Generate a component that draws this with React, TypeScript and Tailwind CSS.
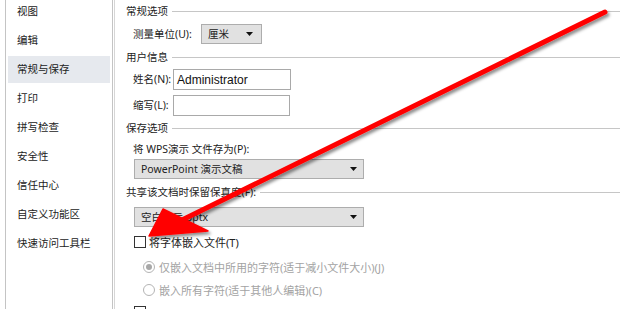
import React from "react";

const items = ["视图", "编辑", "常规与保存", "打印", "拼写检查", "安全性", "信任中心", "自定义功能区", "快速访问工具栏"];

function Header({ text }: { text: string }) {
  return (
    <div className="flex h-[22px] items-center pl-[11px]">
      <span className="whitespace-nowrap">{text}</span>
      <div className="ml-[4px] h-px flex-1 bg-[#c6c6c6]" />
    </div>
  );
}

function Caret() {
  return (
    <svg width="7" height="4" viewBox="0 0 7 4" className="shrink-0">
      <path d="M0 0H7L3.5 4Z" fill="#111" />
    </svg>
  );
}

function Select({ text, w, caretPad }: { text: string; w: string; caretPad: string }) {
  return (
    <div className={`flex h-[20px] items-center justify-between border border-[#adadad] bg-[#e1e1e1] pl-[6px] ${w} ${caretPad}`}>
      <span className="whitespace-nowrap">{text}</span>
      <Caret />
    </div>
  );
}

export default function App() {
  return (
    <div className="relative h-[309px] w-[620px] overflow-hidden bg-white font-['Noto_Sans','Noto_Sans_CJK_SC',sans-serif] text-[10.5px] leading-none text-[#222]">
      <div className="flex h-full">
        <div className="ml-[5px] h-full w-[108px] shrink-0 border-x border-[#c4c4c4] px-[2px] pt-0">
          <div className="-mt-[3px]">
            {items.map((t, i) => (
              <div key={t} className="flex h-[29px] items-center py-[1px]">
                <div className={`flex h-full w-full items-center pl-[9px] ${i === 2 ? "bg-[#e6e9ee]" : ""}`}>{t}</div>
              </div>
            ))}
          </div>
        </div>
        <div className="ml-[1px] h-full flex-1 border-l border-[#d6d6d6]">
          <Header text="常规选项" />
          <div className="mt-[2px] flex h-[20px] items-center pl-[18px]">
            <span className="w-[68px] whitespace-nowrap">测量单位(U):</span>
            <Select text="厘米" w="w-[61px]" caretPad="pr-[8px]" />
          </div>
          <div className="mt-[2px]">
            <Header text="用户信息" />
          </div>
          <div className="mt-[1px] flex h-[21px] items-center pl-[18px]">
            <span className="w-[40px] whitespace-nowrap">姓名(N):</span>
            <div className="flex h-[21px] w-[118px] items-center border border-[#a9a9a9] pl-[3px] font-['Liberation_Sans',sans-serif] text-[12px] text-[#111]">Administrator</div>
          </div>
          <div className="mt-[5px] flex h-[21px] items-center pl-[18px]">
            <span className="w-[40px] whitespace-nowrap">缩写(L):</span>
            <div className="h-[21px] w-[117px] border border-[#a9a9a9]" />
          </div>
          <div className="mt-[1px]">
            <Header text="保存选项" />
          </div>
          <div className="flex h-[20px] items-center pl-[18px] whitespace-pre">将 WPS演示 文件存为(P):</div>
          <div className="pl-[19px]">
            <Select text="PowerPoint 演示文稿" w="w-[230px]" caretPad="pr-[6px]" />
          </div>
          <div className="mt-[2px]">
            <Header text="共享该文档时保留保真度(F):" />
          </div>
          <div className="mt-[4px] pl-[19px]">
            <Select text="空白演示.pptx" w="w-[230px]" caretPad="pr-[6px]" />
          </div>
          <div className="mt-[5px] flex h-[20px] items-center pl-[19px]">
            <div className="h-[12px] w-[12px] border border-[#333]" />
            <span className="ml-[3px] text-[11px]">将字体嵌入文件(T)</span>
          </div>
          <div className="mt-[5px] flex h-[20px] items-center pl-[28px] text-[#a3a3a3]">
            <div className="flex h-[12px] w-[12px] items-center justify-center rounded-full border border-[#b4b4b4]">
              <div className="h-[6px] w-[6px] rounded-full bg-[#a8a8a8]" />
            </div>
            <span className="ml-[4px] text-[11px]">仅嵌入文档中所用的字符(适于减小文件大小)(J)</span>
          </div>
          <div className="mt-[3px] flex h-[20px] items-center pl-[28px] text-[#a3a3a3]">
            <div className="h-[12px] w-[12px] rounded-full border border-[#b4b4b4]" />
            <span className="ml-[4px] text-[11px]">嵌入所有字符(适于其他人编辑)(C)</span>
          </div>
          <div className="mt-[6px] flex h-[20px] items-start pl-[19px]">
            <div className="h-[12px] w-[12px] border border-[#333]" />
          </div>
        </div>
      </div>
      <svg className="pointer-events-none absolute left-0 top-0" width="620" height="309" viewBox="0 0 620 309">
        <defs>
          <filter id="sh" x="-10%" y="-10%" width="130%" height="130%">
            <feDropShadow dx="2" dy="2.5" stdDeviation="1.6" floodColor="#000" floodOpacity="0.45" />
          </filter>
        </defs>
        <g filter="url(#sh)">
          <line x1="605" y1="12" x2="182" y2="220" stroke="#ff0000" strokeWidth="5" strokeLinecap="round" />
          <path d="M149 236 L163 209 L208 231 Z" fill="#ff0000" stroke="#ff0000" strokeWidth="1.5" strokeLinejoin="round" />
        </g>
      </svg>
    </div>
  );
}
